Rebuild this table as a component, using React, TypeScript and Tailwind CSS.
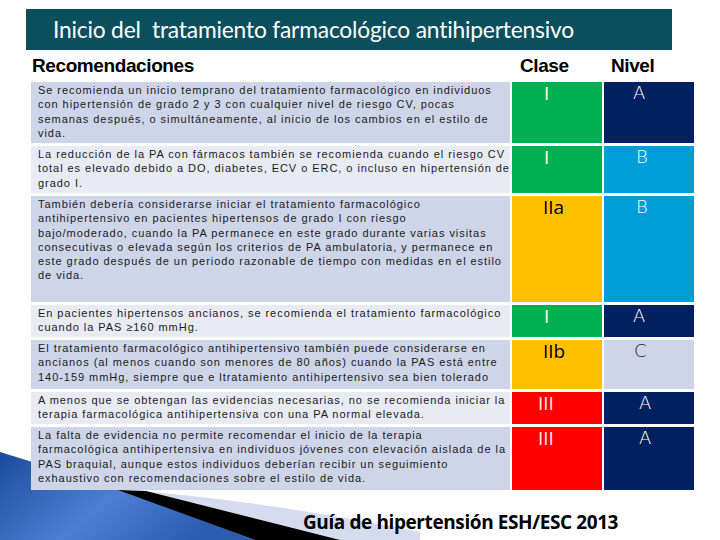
import React from 'react';

type Row = {
  lines: string[];
  h: string;
  bg: string;
  clase: string;
  claseBg: string;
  claseText: string;
  clasePl: string;
  nivel: string;
  nivelBg: string;
  nivelText: string;
  nivelPl: string;
};

const rows: Row[] = [
  {
    lines: [
      'Se recomienda un inicio temprano del tratamiento farmacológico en individuos',
      'con hipertensión de grado 2 y 3 con cualquier nivel de riesgo CV, pocas',
      'semanas después, o simultáneamente, al inicio de los cambios en el estilo de',
      'vida.',
    ],
    h: 'h-[61px]', bg: 'bg-[#cfd5e8]',
    clase: 'I', claseBg: 'bg-[#00b050]', claseText: 'text-white', clasePl: 'pl-[32px]',
    nivel: 'A', nivelBg: 'bg-[#002060]', nivelText: 'text-white', nivelPl: 'pl-[29px]',
  },
  {
    lines: [
      'La reducción de la PA con fármacos también se recomienda cuando el riesgo CV',
      'total es elevado debido a DO, diabetes, ECV o ERC, o incluso en hipertensión de',
      'grado I.',
    ],
    h: 'h-[47px]', bg: 'bg-[#e8ebf4]',
    clase: 'I', claseBg: 'bg-[#00b050]', claseText: 'text-white', clasePl: 'pl-[32px]',
    nivel: 'B', nivelBg: 'bg-[#009ed8]', nivelText: 'text-white', nivelPl: 'pl-[32px]',
  },
  {
    lines: [
      'También debería considerarse iniciar el tratamiento farmacológico',
      'antihipertensivo en pacientes hipertensos de grado I con riesgo',
      'bajo/moderado, cuando la PA permanece en este grado durante varias visitas',
      'consecutivas o elevada según los criterios de PA ambulatoria, y permanece en',
      'este grado después de un periodo razonable de tiempo con medidas en el estilo',
      'de vida.',
    ],
    h: 'h-[106px]', bg: 'bg-[#cfd5e8]',
    clase: 'IIa', claseBg: 'bg-[#ffc000]', claseText: 'text-black', clasePl: 'pl-[31px]',
    nivel: 'B', nivelBg: 'bg-[#009ed8]', nivelText: 'text-white', nivelPl: 'pl-[32px]',
  },
  {
    lines: [
      'En pacientes hipertensos ancianos, se recomienda el tratamiento farmacológico',
      'cuando la PAS ≥160 mmHg.',
    ],
    h: 'h-[32px]', bg: 'bg-[#e8ebf4]',
    clase: 'I', claseBg: 'bg-[#00b050]', claseText: 'text-white', clasePl: 'pl-[32px]',
    nivel: 'A', nivelBg: 'bg-[#002060]', nivelText: 'text-white', nivelPl: 'pl-[29px]',
  },
  {
    lines: [
      'El tratamiento farmacológico antihipertensivo también puede considerarse en',
      'ancianos (al menos cuando son menores de 80 años) cuando la PAS está entre',
      '140-159 mmHg, siempre que e ltratamiento antihipertensivo sea bien tolerado',
    ],
    h: 'h-[49px]', bg: 'bg-[#cfd5e8]',
    clase: 'IIb', claseBg: 'bg-[#ffc000]', claseText: 'text-black', clasePl: 'pl-[31px]',
    nivel: 'C', nivelBg: 'bg-[#cfd5e8]', nivelText: 'text-[#222]', nivelPl: 'pl-[30px]',
  },
  {
    lines: [
      'A menos que se obtengan las evidencias necesarias, no se recomienda iniciar la',
      'terapia farmacológica antihipertensiva con una PA normal elevada.',
    ],
    h: 'h-[32px]', bg: 'bg-[#e8ebf4]',
    clase: 'III', claseBg: 'bg-[#ff0000]', claseText: 'text-[#fde8e8]', clasePl: 'pl-[26px]',
    nivel: 'A', nivelBg: 'bg-[#002060]', nivelText: 'text-white', nivelPl: 'pl-[35px]',
  },
  {
    lines: [
      'La falta de evidencia no permite recomendar el inicio de la terapia',
      'farmacológica antihipertensiva en individuos jóvenes con elevación aislada de la',
      'PAS braquial, aunque estos individuos deberían recibir un seguimiento',
      'exhaustivo con recomendaciones sobre el estilo de vida.',
    ],
    h: 'h-[63px]', bg: 'bg-[#cfd5e8]',
    clase: 'III', claseBg: 'bg-[#ff0000]', claseText: 'text-[#fde8e8]', clasePl: 'pl-[26px]',
    nivel: 'A', nivelBg: 'bg-[#002060]', nivelText: 'text-white', nivelPl: 'pl-[35px]',
  },
];

const Swoosh = () => (
  <svg className="absolute left-0 bottom-0" width="420" height="88" viewBox="0 0 420 88">
    <defs>
      <linearGradient id="blueSw" x1="0" y1="0" x2="1" y2="0.4">
        <stop offset="0" stopColor="#1a4a9c" />
        <stop offset="0.55" stopColor="#4d80d2" />
        <stop offset="1" stopColor="#2a5cb0" />
      </linearGradient>
    </defs>
    <path d="M140,39 Q270,50 420,80 L420,88 L330,88 Z" fill="#d6dcef" />
    <path d="M0,0 Q60,18 120,38 L255,88 L0,88 Z" fill="url(#blueSw)" />
    <path d="M118,38 L146,39 L340,88 L255,88 Z" fill="#000" />
  </svg>
);

export default function App() {
  return (
    <div className="relative w-[720px] h-[540px] overflow-hidden bg-white font-['Liberation_Sans',sans-serif]">
      <Swoosh />

      <div className="relative">
        {/* Title bar */}
        <div className="ml-[26px] mt-[9px] w-[646px] h-[41px] bg-[#0b4f5c] flex items-center pl-[27px]">
          <h1 className="text-white text-[22.8px] font-['Lato',sans-serif] whitespace-pre tracking-[-0.2px]">
            Inicio del  tratamiento farmacológico antihipertensivo
          </h1>
        </div>

        {/* Header row */}
        <div className="flex items-center h-[32px] font-['Liberation_Sans',sans-serif] font-bold text-[19px] tracking-[-0.4px] text-black">
          <span className="ml-[32px] w-[488px]">Recomendaciones</span>
          <span className="w-[91px]">Clase</span>
          <span>Nivel</span>
        </div>

        {/* Table */}
        <div className="ml-[31px] grid grid-cols-[479px_90px_90px] gap-x-[2px] gap-y-[3px]">
          {rows.map((r, i) => (
            <React.Fragment key={i}>
              <div className={`${r.h} ${r.bg} pl-[7px] pt-[1px] overflow-hidden whitespace-nowrap text-[11px] leading-[14.3px] tracking-[0.95px] text-[#1a1a1a]`}>
                {r.lines.map((l, j) => (
                  <div key={j}>{l}</div>
                ))}
              </div>
              <div className={`${r.h} ${r.claseBg} ${r.claseText} ${r.clasePl} pt-[1px] text-[19px] leading-[20px] font-['Open_Sans',sans-serif] font-medium`}>
                {r.clase}
              </div>
              <div className={`${r.h} ${r.nivelBg} ${r.nivelText} ${r.nivelPl} pt-[1px] text-[18px] leading-[20px] font-['DejaVu_Sans',sans-serif] font-light`}>
                {r.nivel}
              </div>
            </React.Fragment>
          ))}
        </div>

        {/* Footer */}
        <div className="mt-[18px] ml-[303px] text-[19px] font-bold font-['Open_Sans',sans-serif] text-black tracking-[-0.4px]">
          Guía de hipertensión ESH/ESC 2013
        </div>
      </div>
    </div>
  );
}
